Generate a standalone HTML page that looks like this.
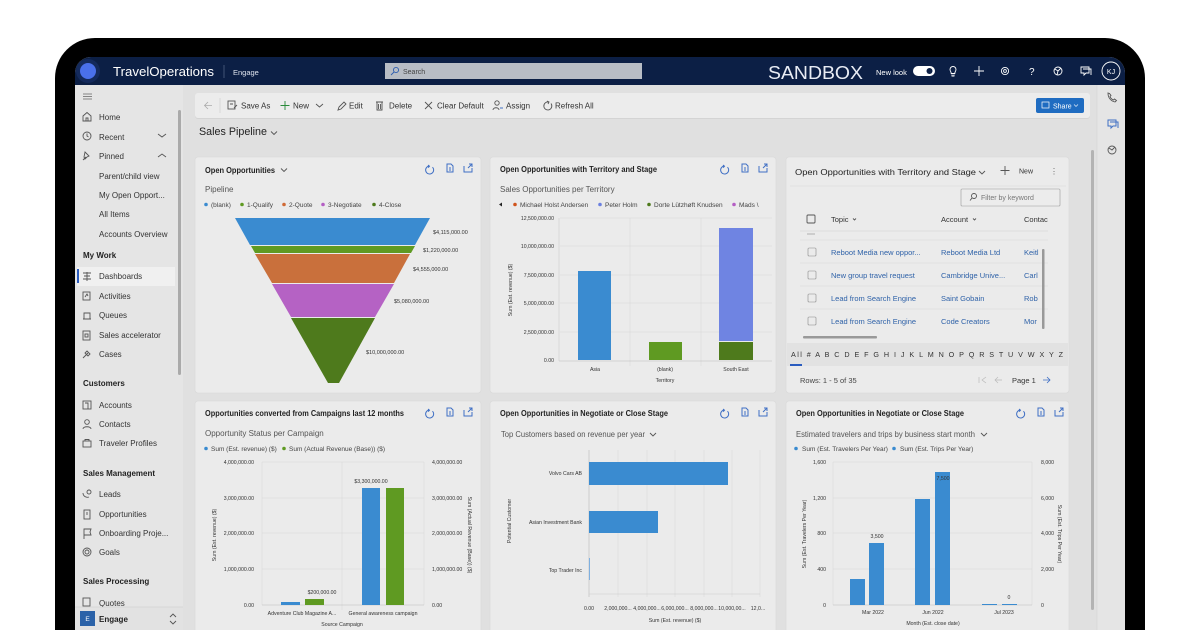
<!DOCTYPE html>
<html><head><meta charset="utf-8"><style>
html,body{margin:0;padding:0;background:#fff;width:1200px;height:630px;overflow:hidden}
svg{display:block}
text{font-family:"Liberation Sans",sans-serif}
.n{font-size:8px;fill:#333}
.h{font-size:8px;fill:#222;font-weight:bold}
.ct{font-size:8.3px;fill:#222;font-weight:bold}
.st{font-size:8px;fill:#555}
.lg{font-size:6.5px;fill:#444}
.ax{font-size:5.2px;fill:#333}
.cm{font-size:8px;fill:#333}
.lk{font-size:7.5px;fill:#2f62a8}
.ic{fill:none;stroke:#555;stroke-width:0.9}
.bi{fill:none;stroke:#3f6fc4;stroke-width:1}
.wi{fill:none;stroke:#fff;stroke-width:0.9}
.gl{stroke:#d9d9d9;stroke-width:0.6}
</style></head><body>
<svg width="1200" height="630" viewBox="0 0 1200 630">
<defs><clipPath id="scr"><rect x="75" y="57" width="1050" height="620" rx="16"/></clipPath></defs>
<rect width="1200" height="630" fill="#fff"/>
<rect x="55" y="38" width="1090" height="640" rx="40" fill="#000"/>
<g clip-path="url(#scr)">
<rect x="75" y="57" width="1050" height="600" fill="#e0e0e0"/>
<rect x="75" y="57" width="1050" height="28" fill="#0c1f45"/>
<circle cx="88" cy="71" r="12" fill="#142a5c"/>
<circle cx="88" cy="71" r="8" fill="#4a70ea"/>
<text x="113" y="76" style="font-size:13px;fill:#fff" textLength="101" lengthAdjust="spacingAndGlyphs">TravelOperations</text>
<line x1="224" y1="65" x2="224" y2="78" stroke="#5a6a8a" stroke-width="0.7"/>
<text x="233" y="75" style="font-size:7.5px;fill:#dfe4ee">Engage</text>
<rect x="385" y="63" width="257" height="16" fill="#b8bdc5"/>
<circle cx="396" cy="70" r="2.6" fill="none" stroke="#2f5fb0" stroke-width="0.9"/>
<line x1="394" y1="72" x2="391" y2="75" stroke="#2f5fb0" stroke-width="0.9"/>
<text x="403" y="74" style="font-size:7px;fill:#444">Search</text>
<text x="768" y="79" style="font-size:18px;fill:#e8ecf4" textLength="95" lengthAdjust="spacingAndGlyphs">SANDBOX</text>
<text x="876" y="75" style="font-size:7.5px;fill:#fff">New look</text>
<rect x="913" y="66" width="22" height="10" rx="5" fill="#fff"/>
<circle cx="929.5" cy="71" r="3" fill="#0c1f45"/>
<path class="wi" d="M952 74.5v1.5h2v-1.5M950 69.5a3 3 0 1 1 6 0c0 1.5-1.2 2.2-1.2 4h-3.6c0-1.8-1.2-2.5-1.2-4z"/>
<path class="wi" d="M979 66v10M974 71h10"/>
<circle cx="1005" cy="71" r="3.6" class="wi"/><circle cx="1005" cy="71" r="1.4" class="wi"/>
<text x="1029" y="75" style="font-size:10px;fill:#fff">?</text>
<circle cx="1058" cy="71" r="4" class="wi"/><path class="wi" d="M1055 69l3 2 3-3M1058 71l-1 4"/>
<path class="wi" d="M1081 67h8v6h-3l-2 2v-2h-3zM1083 69h8v6"/>
<circle cx="1111" cy="71" r="9" class="wi"/>
<text x="1111" y="74" text-anchor="middle" style="font-size:7px;fill:#fff">KJ</text>
<rect x="75" y="85" width="108" height="540" fill="#e5e5e5"/>
<rect x="178" y="110" width="3" height="265" rx="1.5" fill="#aaa"/>
<path d="M83 94h9M83 96.5h9M83 99h9" stroke="#666" stroke-width="0.7"/>
<path class="ic" d="M83 121v-5l4-3.5 4 3.5v5zM86 121v-3h2v3"/>
<text x="99" y="120" class="n">Home</text>
<circle cx="87" cy="136" r="4" class="ic"/><path class="ic" d="M87 133.5v2.5l1.5 1"/>
<text x="99" y="140" class="n">Recent</text><path class="ic" d="M158 134l4 3 4-3"/>
<path class="ic" d="M83 160l3-3M85 152l4 4-2 1-2 2-1-2z"/>
<text x="99" y="159" class="n">Pinned</text><path class="ic" d="M158 157l4-3 4 3"/>
<text x="99" y="179" class="n">Parent/child view</text>
<text x="99" y="198" class="n">My Open Opport...</text>
<text x="99" y="217" class="n">All Items</text>
<text x="99" y="237" class="n">Accounts Overview</text>
<text x="83" y="258" class="h">My Work</text>
<rect x="77" y="267" width="98" height="19" fill="#f0f0f0"/>
<rect x="77" y="269" width="2" height="14" fill="#2a5cbf"/>
<path class="ic" d="M83 273h8M84 276h6M83 279h8M87 272v9"/>
<text x="99" y="279" class="n">Dashboards</text>
<rect x="83" y="292" width="7" height="8" class="ic"/><path class="ic" d="M85 297l2-3 1 2"/>
<text x="99" y="299" class="n">Activities</text>
<path class="ic" d="M83 319h8M84 319v-6h6v6"/>
<text x="99" y="318" class="n">Queues</text>
<rect x="83" y="331" width="7" height="9" class="ic"/><rect x="85" y="334" width="3" height="3" class="ic"/>
<text x="99" y="338" class="n">Sales accelerator</text>
<path class="ic" d="M83 358l5-5M87 351l3 3-2 2-3-3z"/>
<text x="99" y="357" class="n">Cases</text>
<text x="83" y="386" class="h">Customers</text>
<rect x="83" y="401" width="8" height="8" class="ic"/><path class="ic" d="M85 403h3v6"/>
<text x="99" y="408" class="n">Accounts</text>
<circle cx="87" cy="422" r="2.3" class="ic"/><path class="ic" d="M83 429c0-3 8-3 8 0"/>
<text x="99" y="427" class="n">Contacts</text>
<rect x="83" y="441" width="8" height="6" class="ic" stroke="#999"/><path class="ic" stroke="#999" d="M85 441v-1.5h4v1.5"/>
<text x="99" y="446" class="n">Traveler Profiles</text>
<text x="83" y="476" class="h">Sales Management</text>
<circle cx="89" cy="492" r="2" class="ic"/><path class="ic" d="M83 493c0 3 3 5 6 4"/>
<text x="99" y="497" class="n">Leads</text>
<rect x="84" y="510" width="6" height="9" class="ic"/><path class="ic" d="M87 512v3"/>
<text x="99" y="517" class="n">Opportunities</text>
<path class="ic" d="M84 539v-10h7l-1 3 1 3h-7"/>
<text x="99" y="536" class="n">Onboarding Proje...</text>
<circle cx="87" cy="552" r="4" class="ic"/><circle cx="87" cy="552" r="2" class="ic"/>
<text x="99" y="555" class="n">Goals</text>
<text x="83" y="584" class="h">Sales Processing</text>
<rect x="83" y="598" width="7" height="8" class="ic"/>
<text x="99" y="606" class="n">Quotes</text>
<rect x="75" y="607" width="108" height="25" fill="#e2e2e2"/><line x1="75" y1="607" x2="183" y2="607" stroke="#ccc" stroke-width="0.6"/>
<rect x="80" y="611" width="15" height="15" fill="#2b62a8"/>
<text x="87.5" y="621" text-anchor="middle" style="font-size:6.5px;fill:#fff">E</text>
<text x="99" y="622" style="font-size:8px;fill:#222;font-weight:bold">Engage</text>
<path class="ic" d="M170 617l3-3 3 3M170 621l3 3 3-3"/>
<rect x="1097" y="85" width="28" height="560" fill="#e5e5e5"/>
<line x1="1097" y1="85" x2="1097" y2="630" stroke="#d2d2d2" stroke-width="0.6"/>
<path class="ic" d="M1108 93c0 5 3 8 7 9l1.5-1.5-2-1.5-1 1c-1.5-.6-3-2-3.5-3.5l1-1-1.5-2z"/>
<path class="bi" stroke="#6a7fd6" d="M1108 120h8v6h-3l-2 2v-2h-3zM1110 122h8v6"/>
<circle cx="1112" cy="150" r="4" class="ic"/><path class="ic" d="M1109 148l3 2 3-3"/>
<rect x="1091" y="150" width="3" height="460" rx="1.5" fill="#b3b3b3"/>
<rect x="195" y="94" width="895" height="25" rx="3" fill="#d4d4d4"/>
<rect x="195" y="93" width="895" height="25" rx="3" fill="#ececec"/>
<path d="M212 105.5h-7M208 102l-3.5 3.5 3.5 3.5" stroke="#aaa" stroke-width="0.8" fill="none"/>
<line x1="220" y1="98" x2="220" y2="113" stroke="#ccc" stroke-width="0.6"/>
<rect x="228" y="101" width="7" height="8" class="ic"/><path class="ic" d="M230 104h3M234 108l3-3"/>
<text x="241" y="108.5" class="cm">Save As</text>
<path d="M285 101v9M280.5 105.5h9" stroke="#2a8a3a" stroke-width="0.9"/>
<text x="293" y="108.5" class="cm">New</text>
<path class="ic" d="M316 104l3.5 3 3.5-3"/>
<path class="ic" d="M338 110l1-3 5-5 2 2-5 5z"/>
<text x="349" y="108.5" class="cm">Edit</text>
<path class="ic" d="M376 102h7M377 102v8h5v-8M378.5 104v5M380.5 104v5"/>
<text x="389" y="108.5" class="cm">Delete</text>
<path class="ic" d="M425 102l7 7M432 102l-7 7"/>
<text x="437" y="108.5" class="cm">Clear Default</text>
<circle cx="497" cy="103" r="2.2" class="ic"/><path class="ic" d="M493 110c0-3 6-3 6 0"/><path d="M500 108h3" stroke="#3f6fc4" stroke-width="0.9"/>
<text x="506" y="108.5" class="cm">Assign</text>
<path class="ic" d="M548.5 102a4 4 0 1 0 2.5 1.5M547 101l2 1-1 2"/>
<text x="555" y="108.5" class="cm">Refresh All</text>
<rect x="1036" y="98" width="48" height="15" rx="2" fill="#1f6cc1"/>
<rect x="1042" y="102" width="7" height="6" fill="none" stroke="#fff" stroke-width="0.7"/>
<text x="1053" y="108.5" style="font-size:7px;fill:#fff">Share</text>
<path d="M1074 104.5l2 2 2-2" stroke="#fff" stroke-width="0.6" fill="none"/>
<text x="199" y="135" style="font-size:11px;fill:#222" textLength="68" lengthAdjust="spacingAndGlyphs">Sales Pipeline</text>
<path class="ic" stroke="#333" d="M271 131.5l3 3 3-3"/>

<g fill="#ebebeb" stroke="#d8d8d8" stroke-width="0.6">
<rect x="195" y="157" width="286" height="236" rx="3"/>
<rect x="490" y="157" width="286" height="236" rx="3"/>
<rect x="786" y="157" width="283" height="236" rx="3"/>
<rect x="195" y="401" width="286" height="240" rx="3"/>
<rect x="490" y="401" width="286" height="240" rx="3"/>
<rect x="786" y="401" width="283" height="240" rx="3"/>
</g>
<g id="ci">
<path class="bi" d="M429.5 166a4 4 0 1 0 3 1.2M428 165l1.5 1.2-1.3 1.5"/>
<path class="bi" d="M447 164h4l2 2v6h-6zM449 168h2M449 170h2"/>
<path class="bi" d="M464 166v6h8v-4M469 164h3v3M468 168l4-4"/>
</g>
<use href="#ci" x="295" y="0"/>
<use href="#ci" x="0" y="244"/>
<use href="#ci" x="295" y="244"/>
<use href="#ci" x="591" y="244"/>

<text x="205" y="173" class="ct" textLength="70" lengthAdjust="spacingAndGlyphs">Open Opportunities</text>
<path class="ic" d="M281 168.5l3 3 3-3"/>
<text x="205" y="192" class="st">Pipeline</text>
<g class="lg">
<circle cx="206" cy="204.5" r="1.8" fill="#3a8bd0"/><text x="211" y="207">(blank)</text>
<circle cx="242" cy="204.5" r="1.8" fill="#5f9a22"/><text x="247" y="207">1-Qualify</text>
<circle cx="284" cy="204.5" r="1.8" fill="#d06a36"/><text x="289" y="207">2-Quote</text>
<circle cx="323" cy="204.5" r="1.8" fill="#b45ec4"/><text x="328" y="207">3-Negotiate</text>
<circle cx="374" cy="204.5" r="1.8" fill="#4e7a1c"/><text x="379" y="207">4-Close</text>
</g>
<polygon points="235,218 430,218 415,245 250,245" fill="#3a8bd0"/>
<polygon points="251,246 415,246 411,253 255,253" fill="#5f9a22"/>
<polygon points="255,254 410,254 394,283 272,283" fill="#c9703c"/>
<polygon points="272,284 394,284 375,317 291,317" fill="#b562c4"/>
<polygon points="291,318 375,318 339,383 328,383" fill="#4e7a1c"/>
<g class="ax" style="font-size:5.5px">
<text x="433" y="234">$4,115,000.00</text>
<text x="423" y="252">$1,220,000.00</text>
<text x="413" y="271">$4,555,000.00</text>
<text x="394" y="303">$5,080,000.00</text>
<text x="366" y="354">$10,000,000.00</text>
</g>

<text x="500" y="172" class="ct" textLength="157" lengthAdjust="spacingAndGlyphs">Open Opportunities with Territory and Stage</text>
<text x="500" y="192" class="st">Sales Opportunities per Territory</text>
<g class="lg">
<path d="M499 204.5l3-2v4z" fill="#222"/>
<circle cx="515" cy="204.5" r="1.8" fill="#d0541c"/><text x="520" y="207">Michael Holst Andersen</text>
<circle cx="600" cy="204.5" r="1.8" fill="#6b80e0"/><text x="605" y="207">Peter Holm</text>
<circle cx="649" cy="204.5" r="1.8" fill="#4e7a1c"/><text x="654" y="207">Dorte Lützhøft Knudsen</text>
<circle cx="734" cy="204.5" r="1.8" fill="#b45ec4"/><text x="739" y="207">Mads \</text>
</g>
<g class="gl"><line x1="560" y1="218" x2="772" y2="218"/><line x1="560" y1="246" x2="772" y2="246"/><line x1="560" y1="275" x2="772" y2="275"/><line x1="560" y1="303" x2="772" y2="303"/><line x1="560" y1="332" x2="772" y2="332"/><line x1="630" y1="218" x2="630" y2="366"/><line x1="701" y1="218" x2="701" y2="366"/></g>
<line x1="559" y1="361" x2="772" y2="361" stroke="#bbb" stroke-width="0.6"/>
<line x1="559" y1="218" x2="559" y2="361" stroke="#ccc" stroke-width="0.6"/>
<g class="ax" text-anchor="end"><text x="554" y="220">12,500,000.00</text><text x="554" y="248">10,000,000.00</text><text x="554" y="277">7,500,000.00</text><text x="554" y="305">5,000,000.00</text><text x="554" y="334">2,500,000.00</text><text x="554" y="362">0.00</text></g>
<text transform="translate(512,290) rotate(-90)" text-anchor="middle" class="ax">Sum (Est. revenue) ($)</text>
<rect x="578" y="271" width="33" height="89" fill="#3a8bd0"/>
<rect x="649" y="342" width="33" height="18" fill="#5f9a22"/>
<rect x="719" y="228" width="34" height="113" fill="#6f84e2"/>
<rect x="719" y="342" width="34" height="18" fill="#4e7a1c"/>
<g class="ax" text-anchor="middle"><text x="595" y="371">Asia</text><text x="665" y="371">(blank)</text><text x="736" y="371">South East</text><text x="665" y="382">Territory</text></g>

<text x="795" y="175" class="ct" style="font-weight:normal;font-size:8.5px" textLength="181" lengthAdjust="spacingAndGlyphs">Open Opportunities with Territory and Stage</text>
<path class="ic" d="M979 171l3 3 3-3"/>
<path class="ic" stroke="#333" d="M1005 166v9M1000.5 170.5h9"/>
<text x="1019" y="173.5" style="font-size:7px;fill:#333">New</text>
<text x="1050" y="174" style="font-size:8px;fill:#666">⋮</text>
<line x1="790" y1="186" x2="1066" y2="186" stroke="#d5d5d5" stroke-width="0.6"/>
<rect x="961" y="189" width="99" height="17" fill="#ececec" stroke="#999" stroke-width="0.6" rx="1"/>
<circle cx="974" cy="196" r="2.5" class="ic"/><path class="ic" d="M972 198l-2 2.5"/>
<text x="981" y="200" style="font-size:7px;fill:#777">Filter by keyword</text>
<rect x="807" y="215" width="8" height="8" rx="1" class="ic" stroke="#777"/>
<text x="831" y="222" style="font-size:7.5px;fill:#333">Topic</text><path class="ic" d="M853 218.5l1.5 1.5 1.5-1.5"/>
<text x="941" y="222" style="font-size:7.5px;fill:#333">Account</text><path class="ic" d="M973 218.5l1.5 1.5 1.5-1.5"/>
<text x="1024" y="222" style="font-size:7.5px;fill:#333">Contac</text>
<line x1="800" y1="231" x2="1048" y2="231" stroke="#d0d0d0" stroke-width="0.6"/>
<line x1="807" y1="234" x2="815" y2="234" stroke="#888" stroke-width="0.6"/>
<g stroke="#d6d6d6" stroke-width="0.6"><line x1="800" y1="240" x2="1048" y2="240"/><line x1="800" y1="263" x2="1048" y2="263"/><line x1="800" y1="286" x2="1048" y2="286"/><line x1="800" y1="309" x2="1048" y2="309"/></g>
<g fill="none" stroke="#888" stroke-width="0.6"><rect x="808" y="248" width="8" height="8" rx="1"/><rect x="808" y="271" width="8" height="8" rx="1"/><rect x="808" y="294" width="8" height="8" rx="1"/><rect x="808" y="317" width="8" height="8" rx="1"/></g>
<g class="lk">
<text x="831" y="255">Reboot Media new oppor...</text><text x="941" y="255">Reboot Media Ltd</text><text x="1024" y="255">Keitl</text>
<text x="831" y="278">New group travel request</text><text x="941" y="278">Cambridge Unive...</text><text x="1024" y="278">Carl</text>
<text x="831" y="301">Lead from Search Engine</text><text x="941" y="301">Saint Gobain</text><text x="1024" y="301">Rob</text>
<text x="831" y="324">Lead from Search Engine</text><text x="941" y="324">Code Creators</text><text x="1024" y="324">Mor</text>
</g>
<rect x="1042" y="249" width="2.5" height="80" rx="1" fill="#999"/>
<rect x="803" y="336" width="74" height="2.5" rx="1" fill="#999"/>
<rect x="787" y="343" width="281" height="23" fill="#e2e2e2"/>
<text x="791" y="357" style="font-size:7.2px;fill:#333" textLength="272" lengthAdjust="spacing">All # A B C D E F G H I J K L M N O P Q R S T U V W X Y Z</text>
<rect x="790" y="364" width="12" height="2" fill="#2a5cbf"/>
<text x="800" y="383" style="font-size:7.5px;fill:#444">Rows: 1 - 5 of 35</text>
<path d="M979 377v6M986 377l-4 3 4 3" stroke="#bbb" stroke-width="0.7" fill="none"/>
<path d="M1002 380h-7M998 377l-3 3 3 3" stroke="#bbb" stroke-width="0.7" fill="none"/>
<text x="1012" y="383" style="font-size:7.5px;fill:#333">Page 1</text>
<path d="M1043 380h7M1047 377l3 3-3 3" stroke="#3f6fc4" stroke-width="0.8" fill="none"/>

<text x="205" y="416" class="ct" textLength="199" lengthAdjust="spacingAndGlyphs">Opportunities converted from Campaigns last 12 months</text>
<text x="205" y="436" class="st">Opportunity Status per Campaign</text>
<g class="lg"><circle cx="206" cy="448.5" r="1.8" fill="#3a8bd0"/><text x="211" y="451">Sum (Est. revenue) ($)</text>
<circle cx="284" cy="448.5" r="1.8" fill="#5f9a22"/><text x="289" y="451">Sum (Actual Revenue (Base)) ($)</text></g>
<g class="gl"><line x1="262" y1="462" x2="424" y2="462"/><line x1="262" y1="498" x2="424" y2="498"/><line x1="262" y1="533" x2="424" y2="533"/><line x1="262" y1="569" x2="424" y2="569"/><line x1="262" y1="462" x2="262" y2="605"/><line x1="342" y1="462" x2="342" y2="610"/><line x1="424" y1="462" x2="424" y2="605"/></g>
<line x1="262" y1="605" x2="424" y2="605" stroke="#bbb" stroke-width="0.6"/>
<g class="ax" text-anchor="end"><text x="254" y="464">4,000,000.00</text><text x="254" y="500">3,000,000.00</text><text x="254" y="535">2,000,000.00</text><text x="254" y="571">1,000,000.00</text><text x="254" y="607">0.00</text></g>
<g class="ax"><text x="432" y="464">4,000,000.00</text><text x="432" y="500">3,000,000.00</text><text x="432" y="535">2,000,000.00</text><text x="432" y="571">1,000,000.00</text><text x="432" y="607">0.00</text></g>
<text transform="translate(216,535) rotate(-90)" text-anchor="middle" class="ax">Sum (Est. revenue) ($)</text>
<text transform="translate(468,535) rotate(90)" text-anchor="middle" class="ax">Sum (Actual Revenue (Base)) ($)</text>
<rect x="281" y="602" width="19" height="3" fill="#3a8bd0"/>
<rect x="305" y="599" width="19" height="6" fill="#5f9a22"/>
<rect x="362" y="488" width="18" height="117" fill="#3a8bd0"/>
<rect x="386" y="488" width="18" height="117" fill="#5f9a22"/>
<g class="ax" text-anchor="middle"><text x="322" y="594">$200,000.00</text><text x="371" y="483">$3,300,000.00</text>
<text x="302" y="615">Adventure Club Magazine A...</text><text x="383" y="615">General awareness campaign</text><text x="342" y="626">Source Campaign</text></g>

<text x="500" y="416" class="ct" textLength="168" lengthAdjust="spacingAndGlyphs">Open Opportunities in Negotiate or Close Stage</text>
<text x="501" y="437" class="st" textLength="144" lengthAdjust="spacingAndGlyphs">Top Customers based on revenue per year</text>
<path class="ic" d="M650 433l3 3 3-3"/>
<g class="gl"><line x1="618" y1="450" x2="618" y2="597"/><line x1="647" y1="450" x2="647" y2="597"/><line x1="675" y1="450" x2="675" y2="597"/><line x1="704" y1="450" x2="704" y2="597"/><line x1="732" y1="450" x2="732" y2="597"/><line x1="760" y1="450" x2="760" y2="597"/></g>
<line x1="589" y1="450" x2="589" y2="597" stroke="#bbb" stroke-width="0.6"/>
<line x1="589" y1="594" x2="760" y2="594" stroke="#ccc" stroke-width="0.6"/>
<rect x="589" y="462" width="139" height="23" fill="#3a8bd0"/>
<rect x="589" y="511" width="69" height="22" fill="#3a8bd0"/>
<rect x="589" y="558" width="1" height="22" fill="#7fb0e0"/>
<g class="ax" text-anchor="end"><text x="582" y="475">Volvo Cars AB</text><text x="582" y="524">Asian Investment Bank</text><text x="582" y="572">Top Trader Inc</text></g>
<text transform="translate(511,521) rotate(-90)" text-anchor="middle" class="ax">Potential Customer</text>
<g class="ax" text-anchor="middle"><text x="589" y="610">0.00</text><text x="618" y="610">2,000,000...</text><text x="647" y="610">4,000,000...</text><text x="675" y="610">6,000,000...</text><text x="704" y="610">8,000,000...</text><text x="732" y="610">10,000,00...</text><text x="758" y="610">12,0...</text><text x="675" y="622">Sum (Est. revenue) ($)</text></g>

<text x="796" y="416" class="ct" textLength="168" lengthAdjust="spacingAndGlyphs">Open Opportunities in Negotiate or Close Stage</text>
<text x="796" y="437" class="st" textLength="179" lengthAdjust="spacingAndGlyphs">Estimated travelers and trips by business start month</text>
<path class="ic" d="M981 433l3 3 3-3"/>
<g class="lg"><circle cx="796" cy="448.5" r="1.8" fill="#3a8bd0"/><text x="802" y="451">Sum (Est. Travelers Per Year)</text>
<circle cx="894" cy="448.5" r="1.8" fill="#3a8bd0"/><text x="900" y="451">Sum (Est. Trips Per Year)</text></g>
<g class="gl"><line x1="833" y1="462" x2="1032" y2="462"/><line x1="833" y1="498" x2="1032" y2="498"/><line x1="833" y1="533" x2="1032" y2="533"/><line x1="833" y1="569" x2="1032" y2="569"/><line x1="833" y1="462" x2="833" y2="605"/><line x1="1032" y1="462" x2="1032" y2="605"/></g>
<line x1="833" y1="605" x2="1032" y2="605" stroke="#bbb" stroke-width="0.6"/>
<g class="ax" text-anchor="end"><text x="826" y="464">1,600</text><text x="826" y="500">1,200</text><text x="826" y="535">800</text><text x="826" y="571">400</text><text x="826" y="607">0</text></g>
<g class="ax"><text x="1041" y="464">8,000</text><text x="1041" y="500">6,000</text><text x="1041" y="535">4,000</text><text x="1041" y="571">2,000</text><text x="1041" y="607">0</text></g>
<text transform="translate(806,534) rotate(-90)" text-anchor="middle" class="ax">Sum (Est. Travelers Per Year)</text>
<text transform="translate(1058,534) rotate(90)" text-anchor="middle" class="ax">Sum (Est. Trips Per Year)</text>
<rect x="850" y="579" width="15" height="26" fill="#3a8bd0"/>
<rect x="869" y="543" width="15" height="62" fill="#3a8bd0"/>
<rect x="915" y="499" width="15" height="106" fill="#3a8bd0"/>
<rect x="935" y="472" width="15" height="133" fill="#3a8bd0"/>
<rect x="982" y="604" width="15" height="1" fill="#3a8bd0"/>
<rect x="1002" y="604" width="15" height="1" fill="#3a8bd0"/>
<g class="ax" text-anchor="middle"><text x="877" y="538">3,500</text><text x="943" y="480">7,500</text><text x="1009" y="599">0</text>
<text x="873" y="614">Mar 2022</text><text x="933" y="614">Jun 2022</text><text x="1004" y="614">Jul 2023</text><text x="933" y="625">Month (Est. close date)</text></g>
</g>
</svg>
</body></html>
